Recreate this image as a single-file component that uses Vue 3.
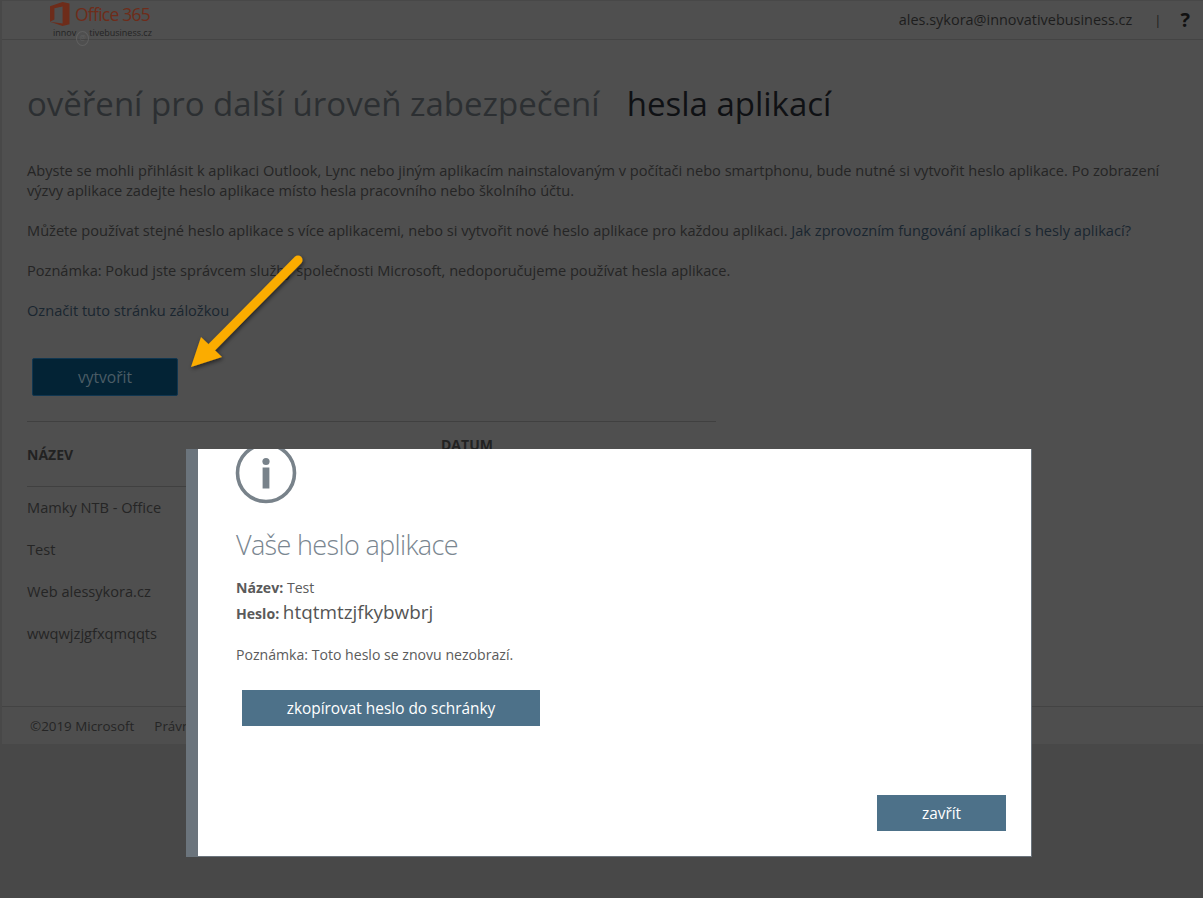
<script setup>
const rows = ['Mamky NTB - Office', 'Test', 'Web alessykora.cz', 'wwqwjzjgfxqmqqts']
</script>

<template>
  <div class="screen">
    <div class="page">
      <header class="top">
        <div class="logo">
          <div class="logo-main">
            <svg class="office" width="20" height="24" viewBox="0 0 20 24">
              <path d="M0 4.2 12.6 0 19.5 1.6V22.2L12.6 24 0 19.8 12.6 21.4V4.4L4.4 6.2V17.6L0 19.8Z" fill="#6e2c1a" />
            </svg>
            <span class="brand">Office 365</span>
          </div>
          <div class="tag">innov<span class="at">@</span>tivebusiness.cz</div>
        </div>
        <div class="user">
          <span>ales.sykora@innovativebusiness.cz</span>
          <span class="sep">|</span>
          <span class="help">?</span>
        </div>
      </header>

      <main class="main">
        <h1 class="title">
          <span class="crumb">ověření pro další úroveň zabezpečení</span>
          <span class="current">hesla aplikací</span>
        </h1>
        <p class="para">Abyste se mohli přihlásit k aplikaci Outlook, Lync nebo jiným aplikacím nainstalovaným v počítači nebo smartphonu, bude nutné si vytvořit heslo aplikace. Po zobrazení výzvy aplikace zadejte heslo aplikace místo hesla pracovního nebo školního účtu.</p>
        <p class="para">Můžete používat stejné heslo aplikace s více aplikacemi, nebo si vytvořit nové heslo aplikace pro každou aplikaci. <a class="link">Jak zprovozním fungování aplikací s hesly aplikací?</a></p>
        <p class="para">Poznámka: Pokud jste správcem služby společnosti Microsoft, nedoporučujeme používat hesla aplikace.</p>
        <p class="para"><a class="link">Označit tuto stránku záložkou</a></p>
        <button class="create">vytvořit</button>

        <section class="table">
          <div class="thead">
            <div class="th-name">NÁZEV</div>
            <div class="th-date">DATUM<br />VYTVOŘENÍ</div>
          </div>
          <div v-for="row in rows" :key="row" class="row">{{ row }}</div>
        </section>
      </main>

      <footer class="foot">
        <span>©2019 Microsoft</span>
        <span>Právní informace</span>
      </footer>
    </div>

    <svg class="arrow" width="130" height="130" viewBox="0 0 130 130">
      <defs>
        <filter id="sh" x="-20%" y="-20%" width="150%" height="150%">
          <feDropShadow dx="1" dy="2" stdDeviation="2" flood-color="#000" flood-opacity=".55" />
        </filter>
      </defs>
      <g filter="url(#sh)">
        <path d="M115 12 29 99" stroke="#fbac03" stroke-width="9" stroke-linecap="round" fill="none" />
        <path d="M8 119 18 89 39 109Z" fill="#fbac03" />
      </g>
    </svg>

    <div class="modal">
      <div class="sheet">
        <svg class="info" width="64" height="58" viewBox="0 0 64 58">
          <circle cx="32" cy="24" r="28.5" fill="none" stroke="#78828a" stroke-width="3.6" />
          <circle cx="32" cy="12.5" r="3.6" fill="#78828a" />
          <rect x="28.6" y="18.5" width="6.8" height="21" fill="#78828a" />
        </svg>
        <h2 class="m-title">Vaše heslo aplikace</h2>
        <div class="m-line"><b>Název:</b> Test</div>
        <div class="m-line pass"><b>Heslo:</b> <span>htqtmtzjfkybwbrj</span></div>
        <p class="m-note">Poznámka: Toto heslo se znovu nezobrazí.</p>
        <button class="m-btn copy">zkopírovat heslo do schránky</button>
        <div class="m-actions"><button class="m-btn close">zavřít</button></div>
      </div>
    </div>
  </div>
</template>

<style>
html, body { margin: 0; background: #484848; }
</style>

<style scoped>
.screen {
  position: relative;
  width: 1203px;
  height: 898px;
  overflow: hidden;
  background: #484848;
  font-family: "Open Sans", "Noto Sans", sans-serif;
  font-size: 14.6px;
  color: #252525;
}
.page {
  margin: 1px 0 0 2px;
  height: 743px;
  background: #4f4f4f;
  display: flex;
  flex-direction: column;
}
.top {
  height: 38px;
  border-bottom: 1px solid #444;
  display: flex;
  justify-content: space-between;
  padding: 0 13px 0 48px;
  flex: none;
}
.logo { width: 110px; }
.logo-main { display: flex; align-items: center; gap: 5px; height: 24px; margin-top: 1px; }
.office { flex: none; }
.brand { font-size: 17.5px; color: #6e2c1a; letter-spacing: -0.75px; line-height: 20px; }
.tag { font-size: 9px; line-height: 12px; color: #242424; margin: 1px 0 0 3px; white-space: nowrap; }
.at {
  display: inline-block;
  box-sizing: border-box;
  width: 13px;
  height: 15px;
  border: 1px solid #5f5f5f;
  border-radius: 50%;
  font-size: 7px;
  line-height: 12px;
  text-align: center;
  color: #5f5f5f;
  vertical-align: -4px;
}
.user { display: flex; align-items: center; height: 37px; font-size: 14.45px; color: #1d1d1d; }
.sep { margin-left: 22px; font-size: 13px; }
.help { margin-left: 19px; font-weight: 700; font-size: 20px; color: #111; }
.main { padding: 0 25px; flex: 1; min-height: 0; }
.title { margin: 40px 0 0; font-weight: 400; font-size: 33px; line-height: 48px; white-space: nowrap; }
.crumb { color: #2c2f32; }
.current { color: #0f1114; margin-left: 27px; }
.para { margin: 0 0 20px; line-height: 20px; width: 1135px; }
.title + .para { margin-top: 32px; }
.link { color: #1a2630; }
.create {
  display: block;
  margin: 38px 0 0 5px;
  width: 146px;
  height: 38px;
  background: #032335;
  border: 1px solid #103650;
  border-radius: 2px;
  color: #4b5d66;
  font: inherit;
  font-size: 15.6px;
  padding: 0;
}
.table { margin-top: 25px; width: 689px; border-top: 1px solid #404040; }
.thead {
  display: grid;
  grid-template-columns: 414px 1fr;
  height: 64px;
  border-bottom: 1px solid #404040;
  align-items: center;
  font-weight: 700;
  font-size: 14px;
  line-height: 18px;
  color: #222;
}
.th-name { margin-top: 2px; }
.th-date { align-self: start; margin-top: 14px; }
.row { height: 42px; line-height: 40px; }
.foot {
  margin-top: auto;
  height: 37px;
  border-top: 1px solid #434343;
  background: #4e4e4e;
  display: flex;
  align-items: center;
  gap: 20px;
  padding-left: 28px;
  flex: none;
  font-size: 13.4px;
}
.arrow { position: absolute; left: 183px; top: 248px; }
.modal {
  position: absolute;
  left: 186px;
  top: 449px;
  width: 846px;
  height: 408px;
  background: #6b747c;
  display: flex;
  box-sizing: border-box;
  padding: 0 1px 1px 12px;
  overflow: hidden;
}
.sheet {
  flex: 1;
  background: #fff;
  padding: 0 25px 0 38px;
  color: #5b5b5b;
  display: flex;
  flex-direction: column;
  align-items: flex-start;
  overflow: hidden;
}
.info { display: block; margin: 0 0 0 -2px; flex: none; height: 58px; }
.m-title {
  margin: 18px 0 0;
  font-weight: 300;
  font-size: 27px;
  letter-spacing: -0.65px;
  line-height: 40px;
  color: #7a8690;
}
.m-line { font-size: 14.1px; line-height: 20px; margin-top: 13px; color: #5b5b5b; white-space: nowrap; }
.m-line b { color: #5a5a5a; }
.pass { margin-top: -1px; line-height: 30px; }
.pass span { font-size: 18.9px; color: #555; }
.m-note { margin: 16px 0 0; line-height: 20px; font-size: 14.1px; }
.m-btn {
  background: #4d7189;
  color: #fff;
  border: 0;
  padding: 0;
  height: 36px;
  font: inherit;
  font-size: 15.4px;
}
.copy { width: 298px; margin: 25px 0 0 6px; }
.m-actions { margin-top: auto; margin-bottom: 25px; align-self: flex-end; }
.close { width: 129px; display: block; }
</style>
